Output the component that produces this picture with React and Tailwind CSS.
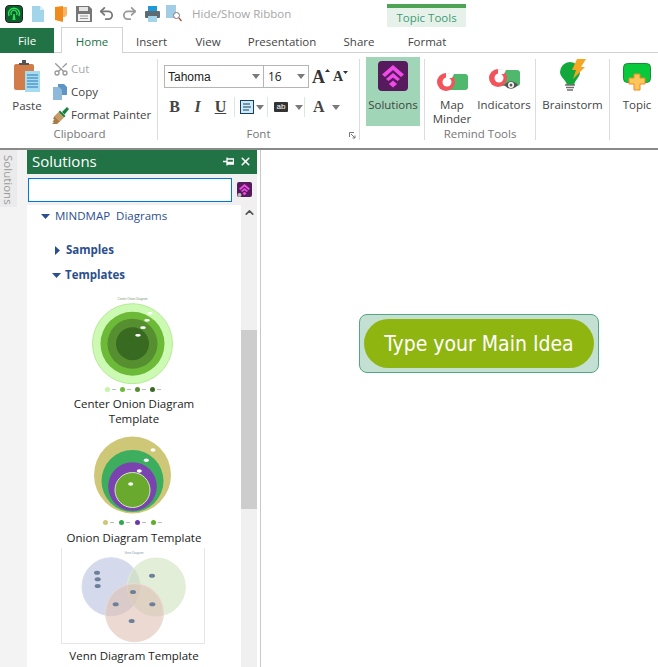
import React from 'react';
import { ChevronUp, Redo2, Scissors, Undo2, X } from 'lucide-react';

const Caret = ({ className = '' }) => (
  <svg width="8" height="5" viewBox="0 0 8 5" className={className}>
    <path d="M0 0h8L4 5z" fill="#7a7a7a" />
  </svg>
);

const Sep = () => <div className="w-px h-[81px] mt-[6px] bg-[#dcdcdc] shrink-0" />;

const LogoIcon = () => (
  <svg width="18" height="18" viewBox="0 0 18 18">
    <rect x="0.5" y="0.5" width="17" height="17" rx="3.5" fill="#0b5f2c" stroke="#222" />
    <path d="M4 11a5.5 5.5 0 1 1 10 0" fill="none" stroke="#35e05a" strokeWidth="1.4" />
    <path d="M6.500 10a3 3 0 1 1 5 0" fill="none" stroke="#35e05a" strokeWidth="1.2" />
    <path d="M7.500 15l.8-6h1.400l.8 6z" fill="#35e05a" />
  </svg>
);

const NewIcon = () => (
  <svg width="12" height="16" viewBox="0 0 12 16">
    <path d="M0 0h8l4 4v12H0z" fill="#a3d5ea" />
    <path d="M8 0l4 4H8z" fill="#d9eef7" />
  </svg>
);

const OpenIcon = () => (
  <svg width="12" height="16" viewBox="0 0 12 16">
    <path d="M0 1l8-1v16l-8-2z" fill="#f08a1d" />
    <path d="M8 1h4v8l-2 2H8z" fill="#f9b366" />
  </svg>
);

const SaveIcon = () => (
  <svg width="16" height="16" viewBox="0 0 16 16">
    <path d="M0 0h13l3 3v13H0z" fill="#777" />
    <rect x="3" y="1" width="9" height="4" fill="#e6e6e6" />
    <rect x="2" y="8" width="12" height="7" fill="#f2f2f2" />
    <path d="M4 10h8M4 12.500h8" stroke="#999" />
  </svg>
);

const PrintIcon = () => (
  <svg width="15" height="16" viewBox="0 0 15 16">
    <rect x="3" y="0" width="9" height="5" fill="#1e9ad6" />
    <rect x="0" y="5" width="15" height="7" rx="1" fill="#5f6b73" />
    <rect x="3" y="10" width="9" height="6" fill="#a3d5ea" />
  </svg>
);

const PreviewIcon = () => (
  <svg width="16" height="17" viewBox="0 0 16 17">
    <rect x="0" y="0" width="10" height="13" fill="#a3cde6" />
    <circle cx="10.500" cy="10.500" r="3" fill="#fff" stroke="#777" />
    <path d="M13 13l2.500 3" stroke="#b5482a" strokeWidth="1.200" />
  </svg>
);

const PasteIcon = () => (
  <svg width="26" height="32" viewBox="0 0 26 32">
    <rect x="0" y="4" width="20" height="26" rx="2" fill="#d27c4a" />
    <path d="M5 5V3h3V0h4v3h3v2z" fill="#555" />
    <rect x="11" y="11" width="15" height="21" fill="#a6dcf0" />
    <path d="M13 15h11M13 18h11M13 21h11M13 24h11M13 27h11" stroke="#2a78b8" />
  </svg>
);

const CopyIcon = () => (
  <svg width="14" height="16" viewBox="0 0 14 16">
    <path d="M5 0h6l3 3v8H5z" fill="#5d96c4" />
    <path d="M0 3h6l3 3v10H0z" fill="#8fb9da" />
  </svg>
);

const BrushIcon = () => (
  <svg width="17" height="17" viewBox="0 0 17 17">
    <path d="M15 0l2 2-4.500 5.500-2.500-2.500z" fill="#14823c" />
    <path d="M8 3.500l5.500 5.500-1.500 1.500L6.500 5z" fill="#14823c" />
    <path d="M6.500 5l5.500 5.500-4 4-5.500-5.500z" fill="#c89a66" />
    <path d="M2.500 9L8 14.500 5 17H0l2-2-1.500-.5 2-2-1.500-.5z" fill="#a97b45" />
  </svg>
);

const PinIcon = () => (
  <svg width="11" height="9" viewBox="0 0 11 9">
    <path d="M0 4.500h4M4 0.500v8M4 2h6.500v5H4M4 5.500h6.500" fill="none" stroke="#fff" strokeWidth="1.300" />
  </svg>
);

const SolutionsIcon = ({ size = 30, badge = false }) => (
  <svg width={size} height={size} viewBox="0 0 30 30">
    <rect width="30" height="30" rx="4" fill="#561a5d" />
    <path d="M15 4l11 9.500-3 2.500-8-7-8 7-3-2.500z" fill="#f04be8" />
    <path d="M15 12l7 6-2.500 2L15 16.500 10.500 20 8 18z" fill="#f04be8" />
    <path d="M15 19.500l4 3.500-4 3.500-4-3.500z" fill="#f04be8" />
    {badge && <circle cx="5" cy="26" r="4" fill="#bbb" />}
  </svg>
);

const MinderIcon = () => (
  <svg width="31" height="18" viewBox="0 0 31 18">
    <rect x="9" y="1" width="22" height="16" rx="3" fill="#4fb86c" />
    <circle cx="9" cy="9" r="9" fill="#f2545b" />
    <circle cx="10" cy="9" r="4.500" fill="#fff" />
    <path d="M9 0v5h6l2-4z" fill="#fff" />
  </svg>
);

const IndicatorsIcon = () => (
  <svg width="31" height="22" viewBox="0 0 31 22">
    <rect x="9" y="1" width="22" height="16" rx="3" fill="#4fb86c" />
    <circle cx="9" cy="9" r="9" fill="#f2545b" />
    <circle cx="10" cy="9" r="4.500" fill="#fff" />
    <path d="M9 0v5h6l2-4z" fill="#fff" />
    <path d="M15 16q7-7.500 14 0q-7 7.500-14 0z" fill="#555" />
    <circle cx="22" cy="16" r="3" fill="#fff" />
    <circle cx="22" cy="16" r="1.500" fill="#555" />
  </svg>
);

const BulbIcon = () => (
  <svg width="26" height="32" viewBox="0 0 26 32">
    <path d="M10 3a10 10 0 0 1 10 10c0 5-5 8-6 13H7C6 21 0 18 0 13A10 10 0 0 1 10 3z" fill="#12a83c" />
    <path d="M5 26h10M6 28.500h8M7 31h6" stroke="#6f6f6f" strokeWidth="1.700" />
    <path d="M17 0h9l-5 8h4L13 20l3-9h-4z" fill="#f5a623" />
  </svg>
);

const TopicIcon = () => (
  <svg width="28" height="28" viewBox="0 0 28 28">
    <rect x="0.500" y="0.500" width="27" height="19" rx="4" fill="#08c93c" stroke="#1c8a35" />
    <path d="M11 11h6v4h5v6h-5v6h-6v-6H6v-6h5z" fill="#fdc65c" stroke="#f08a1d" />
  </svg>
);

const QuickAccess = () => (
  <div className="flex items-center h-[27px] pl-[5px]">
    <LogoIcon />
    <div className="flex items-center ml-[9px]">
      <NewIcon />
      <div className="ml-[11px]"><OpenIcon /></div>
      <div className="ml-[9px]"><SaveIcon /></div>
      <Undo2 size={17} strokeWidth={2.5} className="ml-[6px] text-[#777]" />
      <Redo2 size={17} strokeWidth={2.5} className="ml-[6px] text-[#999]" />
      <div className="ml-[7px]"><PrintIcon /></div>
      <div className="ml-[6px]"><PreviewIcon /></div>
    </div>
    <span className="ml-[10px] w-[99px] whitespace-nowrap text-[11.5px] text-[#a6a6a6]">Hide/Show Ribbon</span>
    <div className="ml-[96px] self-start mt-[4px] w-[79px] h-[23px] bg-[#e6f2e9] border-t-[4px] border-[#4ea354] flex items-center justify-center text-[11.5px] text-[#3f9a77]">
      Topic Tools
    </div>
  </div>
);

const Tabs = () => (
  <div className="flex items-end h-[26px] border-b border-[#d2d2d2] text-[11.5px] text-[#444]">
    <div className="w-[54px] h-[25px] -mb-px bg-[#217346] text-white flex items-center justify-center">File</div>
    <div className="ml-[7px] w-[62px] h-[26px] -mb-px bg-white border border-b-0 border-[#d2d2d2] text-[#217346] flex items-center justify-center pt-[2px]">Home</div>
    <div className="w-[57px] text-center pb-[2px]">Insert</div>
    <div className="w-[56px] text-center pb-[2px]">View</div>
    <div className="w-[92px] text-center pb-[2px]">Presentation</div>
    <div className="w-[62px] text-center pb-[2px]">Share</div>
    <div className="w-[74px] text-center pb-[2px]">Format</div>
  </div>
);

const Caption = ({ children, className = '' }) => (
  <div className={`h-[19px] mt-auto text-center text-[11.5px] leading-[14px] text-[#777] ${className}`}>{children}</div>
);

const Clipboard = () => (
  <div className="w-[157px] shrink-0 h-[93px] flex flex-col">
    <div className="flex">
      <div className="w-[48px] flex flex-col items-center pt-[7px] pl-[6px]">
        <PasteIcon />
        <span className="mt-[5px] text-[11.5px] text-[#444]">Paste</span>
      </div>
      <div className="pl-[5px] pt-[7px] flex flex-col gap-[5px] text-[11.5px] text-[#444]">
        <div className="flex items-center h-[18px] gap-[2px] text-[#aaa]">
          <Scissors size={16} className="text-[#999] -rotate-90" />
          <span>Cut</span>
        </div>
        <div className="flex items-center h-[18px] gap-[4px]"><CopyIcon /><span>Copy</span></div>
        <div className="flex items-center h-[18px] gap-[2px] -ml-[1px]"><BrushIcon /><span className="whitespace-nowrap">Format Painter</span></div>
      </div>
    </div>
    <Caption className="pl-[2px]">Clipboard</Caption>
  </div>
);

const GrowA = ({ size, up }) => (
  <div className="flex items-start">
    <span className={`${size} leading-none font-bold font-['Liberation_Serif',serif] text-[#333]`}>A</span>
    <svg width="5" height="3" viewBox="0 0 5 3" className="mt-[1px]">
      <path d={up ? 'M0 3h5L2.500 0z' : 'M0 0h5L2.500 3z'} fill="#333" />
    </svg>
  </div>
);

const FontGroup = () => (
  <div className="w-[201px] shrink-0 h-[93px] flex flex-col relative">
    <div className="pl-[6px] pt-[12px] flex items-center text-[11.5px] text-[#222]">
      <div className="w-[100px] h-[23px] border border-[#b5b5b5] flex items-center justify-between pl-[3px] pr-[3px]">
        <span className="font-['Liberation_Sans','DejaVu_Sans',sans-serif] text-[12px]">Tahoma</span>
        <Caret />
      </div>
      <div className="w-[45px] h-[23px] border border-l-0 border-[#b5b5b5] flex items-center justify-between pl-[4px] pr-[3px]">
        <span className="text-[12px]">16</span>
        <Caret />
      </div>
      <div className="ml-[3px]"><GrowA size="text-[18px]" up /></div>
      <div className="ml-[3px]"><GrowA size="text-[14px]" /></div>
    </div>
    <div className="pl-[5px] mt-[9px] flex items-center h-[20px] font-['Liberation_Serif',serif] text-[16px] text-[#444]">
      <span className="w-[23px] text-center font-bold">B</span>
      <span className="w-[23px] text-center italic font-bold">I</span>
      <span className="w-[23px] text-center underline font-bold">U</span>
      <div className="w-px h-[20px] ml-[2px] bg-[#d6eadd] mr-[5px]" />
      <svg width="14" height="14" viewBox="0 0 14 14">
        <rect x="0.500" y="0.500" width="13" height="13" fill="#cfe9f6" stroke="#13405f" />
        <path d="M3 4h7M3 7h8M3 10h6" stroke="#13405f" />
      </svg>
      <Caret className="ml-[2px] mr-[3px]" />
      <div className="w-px h-[20px] bg-[#d6eadd] mr-[6px]" />
      <div className="w-[14px] h-[10px] bg-[#333] rounded-[1px] text-white text-[8px] leading-[10px] text-center font-['Liberation_Sans',sans-serif]">ab</div>
      <Caret className="ml-[7px] mr-[1px]" />
      <div className="w-px h-[20px] bg-[#d6eadd] mr-[8px]" />
      <span className="font-bold">A</span>
      <Caret className="ml-[7px]" />
    </div>
    <Caption>Font</Caption>
    <svg width="7" height="7" viewBox="0 0 7 7" className="absolute right-[3px] bottom-[7px]">
      <path d="M0.500 5V0.500H5M2 2l4 4M6 3.500V6H3.500" fill="none" stroke="#777" />
    </svg>
  </div>
);

const BigButton = ({ icon, label, className = '' }) => (
  <div className={`flex flex-col items-center shrink-0 text-[11.5px] leading-[14px] text-[#444] text-center ${className}`}>
    <div className="h-[38px] flex items-end justify-center">{icon}</div>
    <div className="mt-[7px]">{label}</div>
  </div>
);

const Ribbon = () => (
  <div className="flex h-[95px] overflow-hidden">
    <Clipboard />
    <Sep />
    <FontGroup />
    <Sep />
    <div className="w-[64px] shrink-0 pl-[6px] pt-[4px]">
      <div className="w-[54px] h-[69px] bg-[#a0d5b8] flex flex-col items-center pt-[4px] text-[11.5px] text-[#444]">
        <SolutionsIcon />
        <span className="mt-[5px]">Solutions</span>
      </div>
    </div>
    <Sep />
    <div className="w-[110px] shrink-0 h-[93px] flex flex-col">
      <div className="flex">
        <BigButton icon={<MinderIcon />} label={<>Map<br />Minder</>} className="w-[54px]" />
        <BigButton icon={<IndicatorsIcon />} label="Indicators" className="w-[50px]" />
      </div>
      <Caption>Remind Tools</Caption>
    </div>
    <Sep />
    <BigButton icon={<BulbIcon />} label="Brainstorm" className="w-[73px]" />
    <Sep />
    <BigButton icon={<TopicIcon />} label="Topic" className="w-[54px]" />
  </div>
);

const CenterOnion = () => (
  <svg width="96" height="93" viewBox="0 0 96 93">
    <text x="46.500" y="6" textAnchor="middle" fontSize="3" fill="#7a9a6a" fontFamily="Liberation Sans">Center Onion Diagram</text>
    <circle cx="46.500" cy="49.700" r="40" fill="#cdfab3" stroke="#b5ea98" />
    <circle cx="46.500" cy="49.700" r="32" fill="#6cba38" />
    <circle cx="46.500" cy="49.700" r="25" fill="#558f2f" />
    <circle cx="46.500" cy="49.700" r="16.500" fill="#396a21" />
    <ellipse cx="64" cy="19.300" rx="2.500" ry="1.300" fill="#fff" />
    <ellipse cx="61" cy="26.300" rx="2.800" ry="1.400" fill="#fff" />
    <ellipse cx="57" cy="33.700" rx="2.800" ry="1.400" fill="#fff" />
    <ellipse cx="52" cy="41.300" rx="2.800" ry="1.400" fill="#fff" />
  </svg>
);

const Onion = () => (
  <svg width="80" height="80" viewBox="0 0 80 80">
    <circle cx="38.500" cy="40" r="38.500" fill="#cdc777" />
    <circle cx="38.500" cy="46" r="31" fill="#3cae5e" />
    <circle cx="38.500" cy="51.500" r="24.300" fill="#7a43b0" />
    <circle cx="38.500" cy="55" r="17.500" fill="#69aa2e" stroke="#d5e8c5" />
    <ellipse cx="59" cy="15" rx="2.500" ry="1.800" fill="#fff" />
    <ellipse cx="52.300" cy="25.300" rx="2.500" ry="1.800" fill="#fff" />
    <ellipse cx="45.300" cy="36" rx="2.500" ry="1.800" fill="#fff" />
    <ellipse cx="36.700" cy="49" rx="2.500" ry="1.800" fill="#fff" />
  </svg>
);

const Venn = () => (
  <svg width="144" height="96" viewBox="0 0 144 96">
    <rect x="0.500" y="-1" width="143" height="96.500" fill="#fff" stroke="#e6e6e6" />
    <text x="73" y="6" textAnchor="middle" fontSize="3" fill="#8a9ab0" fontFamily="Liberation Sans">Venn Diagram</text>
    <circle cx="50" cy="38.700" r="29" fill="#b8c0e0" fillOpacity="0.600" stroke="#d8dcef" />
    <circle cx="95.300" cy="39" r="29" fill="#cfe3bd" fillOpacity="0.600" stroke="#e0eed5" />
    <circle cx="73.500" cy="64.700" r="29" fill="#dfbfb4" fillOpacity="0.600" stroke="#ecdad3" />
    {[[36, 24.700], [36.700, 31.300], [36.700, 38], [91, 27.700], [72, 44], [54.700, 56.300], [91.300, 56.300], [70.700, 73]].map(([cx, cy]) => (
      <ellipse key={`${cx}-${cy}`} cx={cx} cy={cy} rx="3" ry="2" fill="#6d8099" />
    ))}
  </svg>
);

const Legend = ({ colors, gap }) => (
  <div className={`flex items-center justify-center ${gap}`}>
    {colors.map((c) => (
      <div key={c} className="flex items-center gap-[2px]">
        <svg width="5" height="5" viewBox="0 0 5 5"><circle cx="2.500" cy="2.500" r="2.500" fill={c} /></svg>
        <div className="w-[4px] h-px bg-[#bbb]" />
      </div>
    ))}
  </div>
);

const SolutionsPanel = () => (
  <div className="w-[230px] shrink-0 flex flex-col overflow-hidden bg-[#f0f0f0]">
    <div className="h-[24px] shrink-0 bg-[#217346] text-white flex items-center pl-[5px] pr-[5px] pb-[2px] text-[15px]">
      <span>Solutions</span>
      <div className="ml-auto"><PinIcon /></div>
      <X size={13} strokeWidth={3} className="ml-[5px]" />
    </div>
    <div className="h-[31px] shrink-0 flex items-center pl-px">
      <div className="w-[204px] h-[24px] bg-white border border-[#0078d7]" />
      <div className="ml-[5px]"><SolutionsIcon size={15} badge /></div>
    </div>
    <div className="flex flex-1 min-h-0">
      <div className="w-[214px] shrink-0 bg-white flex flex-col text-[11.5px] text-[#2b4f8e]">
        <div className="flex items-center h-[22px] pl-[14px] gap-[5px]">
          <svg width="9" height="5" viewBox="0 0 9 5"><path d="M0 0h9L4.500 5z" fill="#2b4f8e" /></svg>
          <span className="whitespace-pre">MINDMAP  Diagrams</span>
        </div>
        <div className="flex items-center h-[18px] mt-[14px] pl-[28px] gap-[6px] font-bold">
          <svg width="5" height="9" viewBox="0 0 5 9"><path d="M0 0v9l5-4.500z" fill="#2b4f8e" /></svg>
          <span>Samples</span>
        </div>
        <div className="flex items-center h-[18px] mt-[7px] pl-[25px] gap-[4px] font-bold">
          <svg width="9" height="5" viewBox="0 0 9 5"><path d="M0 0h9L4.500 5z" fill="#2b4f8e" /></svg>
          <span>Templates</span>
        </div>
        <div className="flex flex-col items-center mt-[10px] text-[11.5px] leading-[15px] text-[#222] text-center">
          <CenterOnion />
          <div className="pr-[3px]"><Legend colors={['#c5f5a8', '#6cba38', '#558f2f', '#396a21']} gap="gap-[4px]" /></div>
          <div className="mt-[4px]">Center Onion Diagram<br />Template</div>
          <div className="mt-[9px]"><Onion /></div>
          <div className="mt-[5px] pr-[3px]"><Legend colors={['#cdc777', '#2fa84f', '#6c3aa8', '#5fae2a']} gap="gap-[5px]" /></div>
          <div className="mt-[5px]">Onion Diagram Template</div>
          <div className="mt-[3px] pr-[2px]"><Venn /></div>
          <div className="mt-[4px]">Venn Diagram Template</div>
        </div>
      </div>
      <div className="w-[16px] shrink-0 flex flex-col items-center">
        <ChevronUp size={13} strokeWidth={3} className="mt-[1px] text-[#555]" />
        <div className="w-full h-[179px] mt-[111px] bg-[#cdcdcd]" />
      </div>
    </div>
  </div>
);

const App = () => (
  <div className="w-[658px] h-[667px] overflow-hidden bg-white flex flex-col font-['Open_Sans','Noto_Sans',sans-serif]">
    <QuickAccess />
    <Tabs />
    <Ribbon />
    <div className="flex flex-1 min-h-0 border-t-2 border-[#8a8a8a]">
      <div className="w-[27px] shrink-0 bg-[#f3f3f3]">
        <div className="h-[57px] bg-[#ebebeb] flex items-center pt-[5px] text-[11.5px] text-[#9a9a9a] [writing-mode:vertical-rl]">Solutions</div>
      </div>
      <SolutionsPanel />
      <div className="flex-1 ml-[3px] border-l border-[#c8c8c8] pl-[98px] pt-[164px]">
        <div className="w-[240px] h-[59px] p-[4px] bg-[#c3e0d3] border border-[#52a882] rounded-[8px]">
          <div className="h-full rounded-full bg-[#8fb511] flex items-center justify-center pt-[2px] text-white text-[21px] whitespace-nowrap font-['DejaVu_Sans_Condensed','DejaVu_Sans',sans-serif]">
            Type your Main Idea
          </div>
        </div>
      </div>
    </div>
  </div>
);

export default App;
